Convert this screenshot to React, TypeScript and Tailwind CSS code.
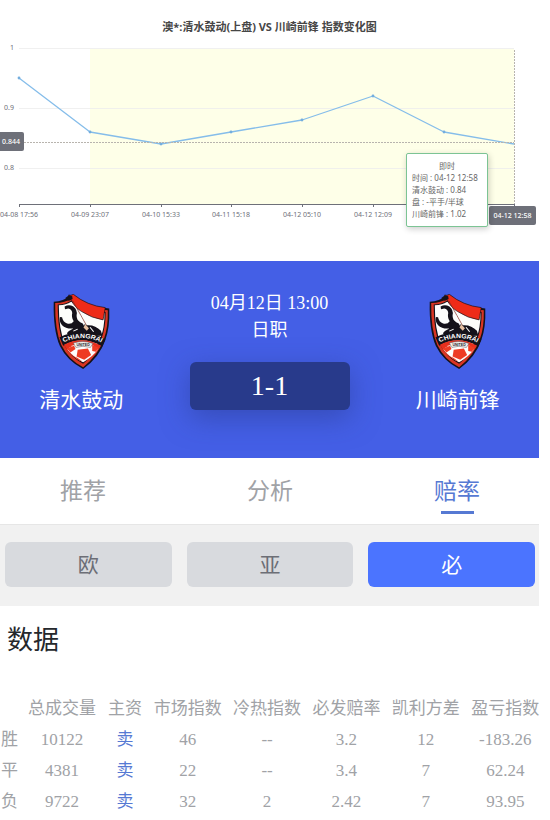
import React from "react";

const points = [
  { label: "04-08 17:56", x: 19, value: 0.95 },
  { label: "04-09 23:07", x: 90, value: 0.86 },
  { label: "04-10 15:33", x: 161, value: 0.84 },
  { label: "04-11 15:18", x: 231, value: 0.86 },
  { label: "04-12 05:10", x: 302, value: 0.88 },
  { label: "04-12 12:09", x: 373, value: 0.92 },
  { label: "", x: 444, value: 0.86 },
  { label: "", x: 514, value: 0.84 },
];

const yOf = (value: number) => Math.round(48 + (1 - value) * 600);

const columns = ["总成交量", "主资", "市场指数", "冷热指数", "必发赔率", "凯利方差", "盈亏指数"];

const rows = [
  { name: "胜", cells: ["10122", "卖", "46", "--", "3.2", "12", "-183.26"] },
  { name: "平", cells: ["4381", "卖", "22", "--", "3.4", "7", "62.24"] },
  { name: "负", cells: ["9722", "卖", "32", "2", "2.42", "7", "93.95"] },
];

function OddsChart() {
  return (
    <section className="relative font-['Noto_Sans','Noto_Sans_CJK_SC',sans-serif]">
      <h1 className="pt-[19px] text-center text-[11px] leading-[15px] font-bold text-[#464646]">
        澳*:清水鼓动(上盘) VS 川崎前锋 指数变化图
      </h1>
      <svg viewBox="0 34 539 227" className="block w-full" role="img" aria-label="指数变化图">
        <rect x="90" y="49" width="424" height="155" fill="#feffe8" />
        {[1, 0.9, 0.8].map((tick) => (
          <g key={tick}>
            <path d={`M19 ${yOf(tick) + 0.5}H514`} stroke="#ececec" strokeOpacity="0.8" />
            <text x="14" y={yOf(tick) + 2} textAnchor="end" fontSize="7" fill="#6e7079">
              {tick}
            </text>
          </g>
        ))}
        <path d="M19 204.5H514.5" stroke="#6e7079" />
        {points.map((p) => (
          <g key={p.x}>
            <path d={`M${p.x + 0.5} 204V207`} stroke="#6e7079" />
            <text x={p.x} y="217" textAnchor="middle" fontSize="7" fill="#6e7079">
              {p.label}
            </text>
          </g>
        ))}
        <polyline
          points={points.map((p) => `${p.x},${yOf(p.value)}`).join(" ")}
          fill="none"
          stroke="#85bdea"
          strokeWidth="1.3"
          strokeLinejoin="round"
        />
        {points.slice(0, 7).map((p) => (
          <circle key={p.x} cx={p.x} cy={yOf(p.value)} r="1.4" fill="#74aede" />
        ))}
        <path d="M24 142.5H514M514.5 50V204" stroke="#b8b4ae" strokeDasharray="2 1" fill="none" />
      </svg>
      <span className="absolute top-[132px] left-0 rounded-r-xs bg-[#6e7079] pr-1 pl-0.5 text-[7px] leading-[19px] font-medium text-white">
        0.844
      </span>
      <span className="absolute top-[206px] right-[3px] w-[47px] rounded-xs bg-[#6e7079] text-center text-[7px] leading-[19px] font-medium whitespace-nowrap text-white">
        04-12 12:58
      </span>
      <div
        role="tooltip"
        className="absolute top-[153px] right-[51px] w-[82px] rounded-xs border border-[#7cc494] bg-white px-[5px] py-[6px] text-[8px] leading-[12px] whitespace-nowrap text-[#666] shadow-[1px_2px_6px_rgba(0,0,0,0.2)]"
      >
        <div className="text-center">即时</div>
        <div>时间 : 04-12 12:58</div>
        <div>清水鼓动 : 0.84</div>
        <div>盘 : -平手/半球</div>
        <div>川崎前锋 : 1.02</div>
      </div>
    </section>
  );
}

function Crest({ id }: { id: string }) {
  return (
    <svg
      viewBox="48 28 157 229"
      preserveAspectRatio="none"
      className="h-[76px] w-[57px]"
      role="img"
      aria-label="队徽"
    >
      <path
        d="M50 51Q77 50 95 34L112 40Q150 68 203 72Q205 130 192 167Q176 218 131 254Q87 230 67 185Q48 137 50 51Z"
        fill="#15121a"
      />
      <path
        d="M54 55Q82 54 98 42Q145 73 199 77Q200 130 188 164Q172 212 131 249Q90 226 71 182Q53 137 54 55Z"
        fill="#d93522"
      />
      <path
        d="M61 60Q83 58 98 48Q145 79 193 82Q193 130 182 160Q169 205 131 238Q96 218 78 180Q61 140 61 60Z"
        fill="#15121a"
      />
      <path
        d="M64 62Q84 61 98 51Q145 82 190 85Q190 130 179 159Q166 201 131 233Q99 214 81 178Q64 138 64 62Z"
        fill="#fdfdfb"
      />
      <path
        d="M91 31Q97 34 104 29Q142 63 192 69L186 106Q155 101 127 81Q108 69 96 43Z"
        fill="#ee2b18"
        stroke="#15121a"
        strokeWidth="2"
      />
      <path d="M82 40L92 32L101 35L102 43L92 48L85 45Z" fill="#15121a" />
      <path d="M102 48L146 134" stroke="#7d2a20" strokeWidth="2" />
      <path
        d="M80 66Q92 58 104 66Q116 76 113 92Q112 106 124 114L142 122Q164 120 180 139L184 154L96 156L86 146Q92 138 104 132Q84 134 73 122Q64 111 67 97L73 98Q75 112 87 117Q99 120 105 110Q98 98 101 85Q100 74 90 72L81 74Z"
        fill="#15121a"
      />
      <path
        d="M121 92L134 122M150 128L160 142M104 140L116 134"
        fill="none"
        stroke="#fff"
        strokeWidth="3"
      />
      <path d="M137 119L147 131L141 139L132 129Z" fill="#e6bfa1" />
      <path d="M66 158Q128 126 192 164L184 186Q128 152 76 184Z" fill="#15121a" />
      <path d="M78 181Q129 153 179 183Q167 209 131 234Q94 216 78 181Z" fill="#e8301d" />
      <path d="M88 196Q100 180 131 176Q160 180 171 196Q158 216 131 234Q104 218 88 196Z" fill="#fdfdfb" />
      <path d="M116 196L144 192L153 212L134 226L113 216Z" fill="#ee3c24" />
      <path
        d="M86 192L106 184L110 194L96 204Z M156 182L174 190L166 202L156 200Z M103 215L115 220L128 231L118 227Z"
        fill="#ee3c24"
      />
      <path d="M104 176Q130 166 158 177L151 189Q130 182 111 189Z" fill="#f4f4f0" stroke="#5a545c" strokeWidth="1.5" />
      <path id={id} d="M72 177Q129 144 187 178" fill="none" />
      <text
        fill="#fff"
        fontFamily="'Liberation Sans',sans-serif"
        fontSize="19"
        fontWeight="700"
        textAnchor="middle"
      >
        <textPath href={`#${id}`} startOffset="50%">
          CHIANGRAI
        </textPath>
      </text>
      <text
        x="131"
        y="184"
        textAnchor="middle"
        fill="#29242c"
        fontFamily="'Liberation Sans',sans-serif"
        fontSize="10"
        fontWeight="700"
      >
        UNITED
      </text>
    </svg>
  );
}

function Team({ name, id }: { name: string; id: string }) {
  return (
    <div className="flex flex-1 flex-col items-center pt-[33px]">
      <Crest id={id} />
      <div className="mt-[15px] text-[21px] leading-[30px]">{name}</div>
    </div>
  );
}

export default function App() {
  return (
    <main className="bg-white pr-[11px] font-['Liberation_Serif','Noto_Sans_CJK_SC',serif]">
      <OddsChart />

      <section className="flex bg-[#445fe6] pb-[43px] text-white">
        <Team name="清水鼓动" id="crest-home" />
        <div className="flex w-[214px] flex-col items-center pt-[29px] text-[18px] leading-[27px]">
          <div>04月12日 13:00</div>
          <div>日职</div>
          <div className="mt-[18px] w-[160px] rounded-md bg-[#283a8b] text-center text-[28px] leading-[48px] shadow-[0_8px_28px_rgba(40,58,139,0.5)]">
            1-1
          </div>
        </div>
        <Team name="川崎前锋" id="crest-away" />
      </section>

      <nav className="flex justify-between border-b border-[#e6e6e6] pr-[59px] pl-[60px] text-[23px] text-[#a0a2a6]">
        <button className="h-[66px] pt-[2px]">推荐</button>
        <button className="h-[66px] pt-[2px]">分析</button>
        <button className="relative h-[66px] pt-[2px] text-[#5679d3] after:absolute after:bottom-[10px] after:left-[7px] after:h-[3px] after:w-[33px] after:bg-[#5679d3]">
          赔率
        </button>
      </nav>

      <div className="grid grid-cols-3 gap-[15px] bg-[#f1f1f1] pt-[17px] pr-[4px] pb-[19px] pl-[5px] text-[21px] text-[#6c6e76]">
        <button className="h-[45px] rounded-md bg-[#d8dade] pt-[2px]">欧</button>
        <button className="h-[45px] rounded-md bg-[#d8dade] pt-[2px]">亚</button>
        <button className="h-[45px] rounded-md bg-[#4b74ff] pt-[2px] text-white">必</button>
      </div>

      <section>
        <h2 className="px-[7px] pt-[16px] text-[26px] leading-[38px] text-[#25282c]">数据</h2>
        <div className="-mr-[6px] pt-[33px]">
          <table className="w-full table-fixed text-center text-[17px] leading-[31px] whitespace-nowrap text-[#a0a2a6]">
            <colgroup>
              <col className="w-[22px]" />
              <col className="w-[80px]" />
              <col className="w-[46px]" />
              <col />
              <col />
              <col />
              <col />
              <col />
            </colgroup>
            <thead>
              <tr>
                <td className="p-0" />
                {columns.map((c) => (
                  <th key={c} scope="col" className="p-0 font-normal">
                    {c}
                  </th>
                ))}
              </tr>
            </thead>
            <tbody>
              {rows.map((row) => (
                <tr key={row.name}>
                  <th scope="row" className="p-0 pl-px text-left font-normal">
                    {row.name}
                  </th>
                  {row.cells.map((cell, i) => (
                    <td key={i} className={i === 1 ? "p-0 text-[#5679d3]" : "p-0"}>
                      {cell}
                    </td>
                  ))}
                </tr>
              ))}
            </tbody>
          </table>
        </div>
      </section>
    </main>
  );
}
